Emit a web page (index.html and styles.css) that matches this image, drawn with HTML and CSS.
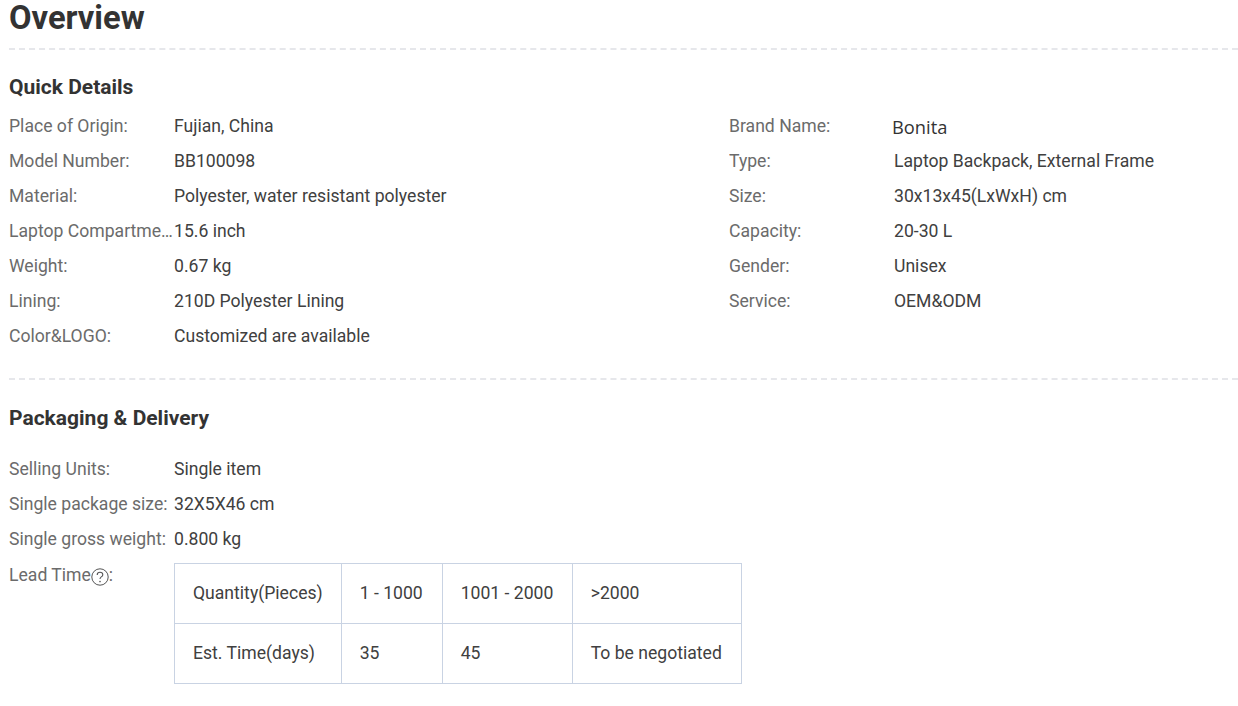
FILE: index.html
```html
<!DOCTYPE html>
<html lang="en">
<head>
<meta charset="utf-8">
<title>Overview</title>
<link rel="stylesheet" href="styles.css">
</head>
<body>
<main class="overview">
  <h1 class="title">Overview</h1>
  <section class="section">
    <h2 class="heading">Quick Details</h2>
    <div class="attrs">
      <div class="row"><div class="label">Place of Origin:</div><div class="value">Fujian, China</div></div>
      <div class="row"><div class="label">Brand Name:</div><div class="value brand">Bonita</div></div>
      <div class="row"><div class="label">Model Number:</div><div class="value">BB100098</div></div>
      <div class="row"><div class="label">Type:</div><div class="value">Laptop Backpack, External Frame</div></div>
      <div class="row"><div class="label">Material:</div><div class="value">Polyester, water resistant polyester</div></div>
      <div class="row"><div class="label">Size:</div><div class="value">30x13x45(LxWxH) cm</div></div>
      <div class="row"><div class="label">Laptop Compartment Size:</div><div class="value">15.6 inch</div></div>
      <div class="row"><div class="label">Capacity:</div><div class="value">20-30 L</div></div>
      <div class="row"><div class="label">Weight:</div><div class="value">0.67 kg</div></div>
      <div class="row"><div class="label">Gender:</div><div class="value">Unisex</div></div>
      <div class="row"><div class="label">Lining:</div><div class="value">210D Polyester Lining</div></div>
      <div class="row"><div class="label">Service:</div><div class="value">OEM&amp;ODM</div></div>
      <div class="row"><div class="label">Color&amp;LOGO:</div><div class="value">Customized are available</div></div>
    </div>
  </section>
  <section class="section packaging">
    <h2 class="heading">Packaging &amp; Delivery</h2>
    <div class="list">
      <div class="row"><div class="label">Selling Units:</div><div class="value">Single item</div></div>
      <div class="row"><div class="label">Single package size:</div><div class="value">32X5X46 cm</div></div>
      <div class="row"><div class="label">Single gross weight:</div><div class="value">0.800 kg</div></div>
      <div class="row lead">
        <div class="label lead-label">Lead Time<svg class="help" width="18" height="18" viewBox="0 0 18 18"><circle cx="9" cy="9" r="8.2" fill="none" stroke="#555" stroke-width="1"/><path d="M6.2 7c0-1.7 1.2-2.7 2.8-2.7s2.8 1 2.8 2.4c0 1.1-.6 1.6-1.5 2.2-.9.6-1.3 1.1-1.3 2.1" fill="none" stroke="#555" stroke-width="1.1"/><circle cx="9" cy="13.6" r=".8" fill="#555"/></svg>:</div>
        <table class="lead-table">
          <tr><td class="c1">Quantity(Pieces)</td><td class="c2">1 - 1000</td><td class="c3">1001 - 2000</td><td class="c4">&gt;2000</td></tr>
          <tr><td class="c1">Est. Time(days)</td><td class="c2">35</td><td class="c3">45</td><td class="c4">To be negotiated</td></tr>
        </table>
      </div>
    </div>
  </section>
</main>
</body>
</html>
```

FILE: styles.css
```css
html, body {
  margin: 0;
  padding: 0;
  background: #fff;
}
body {
  font-family: Roboto, "Liberation Sans", sans-serif;
  font-size: 17.6px;
  color: #404040;
}
.overview {
  padding-left: 9px;
}
.title {
  margin: 0;
  height: 48px;
  font-size: 32.7px;
  line-height: 36px;
  font-weight: 700;
  color: #333;
  border-bottom: 2px dashed #e6e7eb;
}
.section {
  padding-top: 21px;
}
.heading {
  margin: 0;
  font-size: 21px;
  line-height: 32px;
  font-weight: 700;
  color: #333;
}
.attrs {
  display: grid;
  grid-template-columns: 720px 1fr;
  margin-top: 6px;
  padding-bottom: 24px;
  border-bottom: 2px dashed #e6e7eb;
}
.row {
  display: flex;
  height: 35px;
  line-height: 35px;
}
.label {
  flex: none;
  width: 164px;
  margin-right: 1px;
  color: #6b6b6b;
  white-space: nowrap;
  overflow: hidden;
  text-overflow: ellipsis;
}
.lead-label {
  padding-top: 1px;
  height: 35px;
}
.value {
  color: #404040;
}
.brand {
  font-family: "Open Sans", sans-serif;
  font-size: 18.3px;
  color: #333;
  margin-left: -2px;
}
.packaging {
  padding-top: 22px;
}
.list {
  margin-top: 18px;
}
.row.lead {
  height: auto;
}
.help {
  vertical-align: -5px;
}
.lead-table {
  border-collapse: collapse;
  margin-top: 6px;
  line-height: 20px;
}
.lead-table td {
  border: 1px solid #c9d3e3;
  height: 60px;
  padding: 0 18px 2px;
  box-sizing: border-box;
  white-space: nowrap;
}
.lead-table .c2 {
  width: 101px;
}
.lead-table .c3 {
  width: 130px;
}
.lead-table .c4 {
  width: 169px;
}
```
